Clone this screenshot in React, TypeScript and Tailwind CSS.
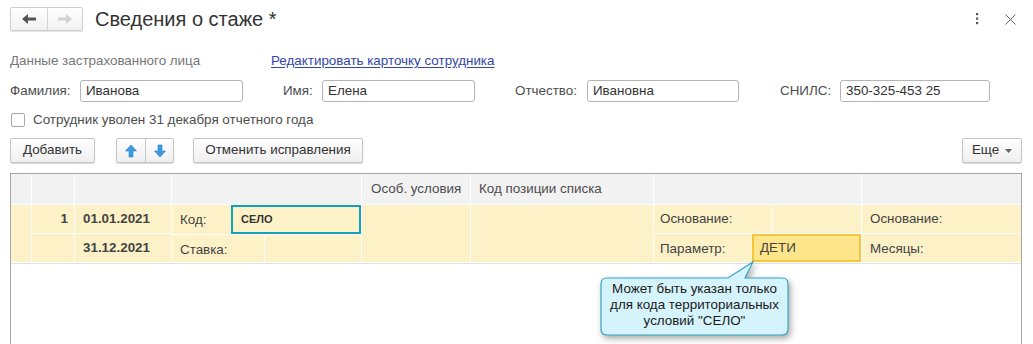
const font = { fontFamily: '"Liberation Sans", Arial, sans-serif' };

function Btn({ children, className = "" }: { children: React.ReactNode; className?: string }) {
  return (
    <div
      className={`flex h-[25px] items-center justify-center rounded-[2px] border border-[#c4c4c4] bg-gradient-to-b from-white to-[#efefef] text-[13.4px] text-[#333] shadow-[0_1px_1px_rgba(0,0,0,0.15)] ${className}`}
    >
      {children}
    </div>
  );
}

function Field({ value, w }: { value: string; w: string }) {
  return (
    <div className={`flex h-[22px] items-center rounded-[3px] border border-[#b5b5b5] bg-white px-[5px] text-[13.4px] text-[#333] ${w}`}>
      {value}
    </div>
  );
}

function Arrow({ up }: { up?: boolean }) {
  return (
    <svg width="12" height="14" viewBox="0 0 12 14">
      <polygon
        points={up ? "6,1 11.5,7 8,7 8,13 4,13 4,7 0.5,7" : "6,13 11.5,7 8,7 8,1 4,1 4,7 0.5,7"}
        fill="#3d9ae0"
        stroke="#2b7fc4"
        strokeWidth="0.6"
      />
    </svg>
  );
}

const cell = "bg-[#fdf2c7] text-[13.4px] text-[#444]";
const head = "bg-[#f2f2f2] text-[13.4px] text-[#4d4d4d]";

export default function App() {
  return (
    <div className="relative h-[344px] overflow-hidden bg-white px-[10px]" style={font}>
      {/* Title bar */}
      <div className="mt-[7px] flex h-[24px] items-center">
        <div className="flex h-[24px] w-[73px] rounded-[2px] border border-[#cfcfcf] bg-gradient-to-b from-white to-[#f1f1f1] shadow-[0_1px_1px_rgba(0,0,0,0.12)]">
          <div className="flex w-[37px] items-center justify-center border-r border-[#d6d6d6]">
            <svg width="14" height="10" viewBox="0 0 14 10">
              <polygon points="0,5 6,0 6,3.5 14,3.5 14,6.5 6,6.5 6,10" fill="#555" />
            </svg>
          </div>
          <div className="flex flex-1 items-center justify-center">
            <svg width="14" height="10" viewBox="0 0 14 10">
              <polygon points="14,5 8,0 8,3.5 0,3.5 0,6.5 8,6.5 8,10" fill="#d2d2d2" />
            </svg>
          </div>
        </div>
        <div className="ml-[12px] text-[20px] text-[#333]">Сведения о стаже *</div>
        <div className="ml-auto flex items-center">
          <svg width="4" height="12" viewBox="0 0 4 12" className="mr-[26px]">
            <rect x="1" y="0" width="2.2" height="2.2" fill="#555" />
            <rect x="1" y="4.5" width="2.2" height="2.2" fill="#555" />
            <rect x="1" y="9" width="2.2" height="2.2" fill="#555" />
          </svg>
          <svg width="11" height="11" viewBox="0 0 11 11" className="mr-[7px]">
            <path d="M0.5 0.5 L10.5 10.5 M10.5 0.5 L0.5 10.5" stroke="#666" strokeWidth="1" />
          </svg>
        </div>
      </div>

      {/* Section caption */}
      <div className="mt-[22px] flex h-[16px] items-center text-[13.4px]">
        <span className="w-[261px] text-[#777]">Данные застрахованного лица</span>
        <span className="text-[#3447a8] underline underline-offset-2">Редактировать карточку сотрудника</span>
      </div>

      {/* Name fields */}
      <div className="mt-[11px] flex items-center text-[13.4px] text-[#4d4d4d]">
        <span className="w-[70px]">Фамилия:</span>
        <Field value="Иванова" w="w-[163px]" />
        <span className="ml-[40px] w-[39px]">Имя:</span>
        <Field value="Елена" w="w-[153px]" />
        <span className="ml-[40px] w-[72px]">Отчество:</span>
        <Field value="Ивановна" w="w-[152px]" />
        <span className="ml-[41px] w-[60px]">СНИЛС:</span>
        <Field value="350-325-453 25" w="w-[150px]" />
      </div>

      {/* Checkbox */}
      <div className="mt-[10px] flex h-[16px] items-center text-[13.4px] text-[#4d4d4d]">
        <div className="ml-px h-[14px] w-[14px] rounded-[2px] border border-[#a8a8a8] bg-white" />
        <span className="ml-[8px]">Сотрудник уволен 31 декабря отчетного года</span>
      </div>

      {/* Toolbar */}
      <div className="mt-[10px] flex items-center">
        <Btn className="w-[85px]">Добавить</Btn>
        <div className="ml-[21px] flex h-[25px] w-[58px] rounded-[2px] border border-[#c4c4c4] bg-gradient-to-b from-white to-[#efefef] shadow-[0_1px_1px_rgba(0,0,0,0.15)]">
          <div className="flex w-[29px] items-center justify-center border-r border-[#c8c8c8]">
            <Arrow up />
          </div>
          <div className="flex flex-1 items-center justify-center">
            <Arrow />
          </div>
        </div>
        <Btn className="ml-[19px] w-[170px]">Отменить исправления</Btn>
        <Btn className="ml-auto mr-px w-[60px]">
          Еще
          <svg width="7" height="4" viewBox="0 0 7 4" className="ml-[6px]">
            <polygon points="0,0 7,0 3.5,4" fill="#666" />
          </svg>
        </Btn>
      </div>

      {/* Table */}
      <div className="mt-[10px] h-[190px] w-[1012px] border-x border-t border-[#a6a6a6] bg-white">
        {/* header */}
        <div className="flex h-[31px] gap-px border-b border-white">
          <div className={`${head} w-[20px]`} />
          <div className={`${head} w-[42px]`} />
          <div className={`${head} w-[96px]`} />
          <div className={`${head} w-[189px]`} />
          <div className={`${head} flex w-[108px] items-center pl-[9px]`}>Особ. условия</div>
          <div className={`${head} flex w-[182px] items-center pl-[8px]`}>Код позиции списка</div>
          <div className={`${head} w-[207px]`} />
          <div className={`${head} flex-1`} />
        </div>
        {/* data row */}
        <div className="flex h-[57px] gap-px">
          <div className={`${cell} w-[20px]`} />
          <div className="flex w-[42px] flex-col gap-px">
            <div className={`${cell} flex h-[28px] items-center justify-end pr-[6px] text-[11px] font-bold text-[#4a4a4a]`}>1</div>
            <div className={`${cell} flex-1`} />
          </div>
          <div className="flex w-[96px] flex-col gap-px">
            <div className={`${cell} flex h-[28px] items-center pl-[8px] text-[11px] font-bold text-[#4a4a4a]`}>01.01.2021</div>
            <div className={`${cell} flex flex-1 items-center pl-[8px] text-[11px] font-bold text-[#4a4a4a]`}>31.12.2021</div>
          </div>
          <div className="flex w-[189px] flex-col gap-px">
            <div className={`${cell} flex h-[29px] items-stretch`}>
              <span className="flex w-[59px] items-center pl-[8px] pt-[2px]">Код:</span>
              <div className="flex flex-1 items-start border-2 border-[#0fa2ba] pl-[8px] pt-[4px] text-[11px] font-bold text-[#333]">
                СЕЛО
              </div>
            </div>
            <div className="flex flex-1 gap-px">
              <div className={`${cell} flex w-[92px] items-center pl-[8px] pt-[3px]`}>Ставка:</div>
              <div className={`${cell} flex-1`} />
            </div>
          </div>
          <div className={`${cell} w-[108px]`} />
          <div className={`${cell} w-[182px]`} />
          <div className="flex w-[207px] flex-col gap-px">
            <div className="flex h-[28px] gap-px">
              <div className={`${cell} flex w-[118px] items-center pl-[6px]`}>Основание:</div>
              <div className={`${cell} flex-1`} />
            </div>
            <div className="flex flex-1">
              <div className={`${cell} flex w-[98px] items-center pl-[6px] pt-[2px]`}>Параметр:</div>
              <div className="flex flex-1 items-center border-2 border-[#f5c63c] bg-[#fde58b] pl-[6px] text-[13.4px] text-[#444]">
                ДЕТИ
              </div>
            </div>
          </div>
          <div className="flex flex-1 flex-col gap-px">
            <div className={`${cell} flex h-[28px] items-center pl-[8px]`}>Основание:</div>
            <div className={`${cell} flex flex-1 items-center pl-[8px] pt-[2px]`}>Месяцы:</div>
          </div>
        </div>
        <div className="mt-px h-px bg-[#e2e2e2]" />
      </div>

      {/* Callout */}
      <div className="absolute left-[598px] top-[260px] h-[82px] w-[200px]">
        <svg width="200" height="82" viewBox="0 0 200 82" className="absolute inset-0 drop-shadow-[2px_3px_3px_rgba(0,0,0,0.35)]">
          <path
            d="M9 18 H130 L155 2 L147 18 H184 Q190 18 190 24 V69 Q190 75 184 75 H9 Q3 75 3 69 V24 Q3 18 9 18 Z"
            fill="#d5f3fb"
            stroke="#35a6c4"
            strokeWidth="1.2"
          />
        </svg>
        <div className="absolute left-[3px] top-[21px] flex w-[187px] flex-col items-center text-[13.4px] leading-[16px] text-[#1a1a1a]">
          <span>Может быть указан только</span>
          <span>для кода территориальных</span>
          <span>условий "СЕЛО"</span>
        </div>
      </div>
    </div>
  );
}
